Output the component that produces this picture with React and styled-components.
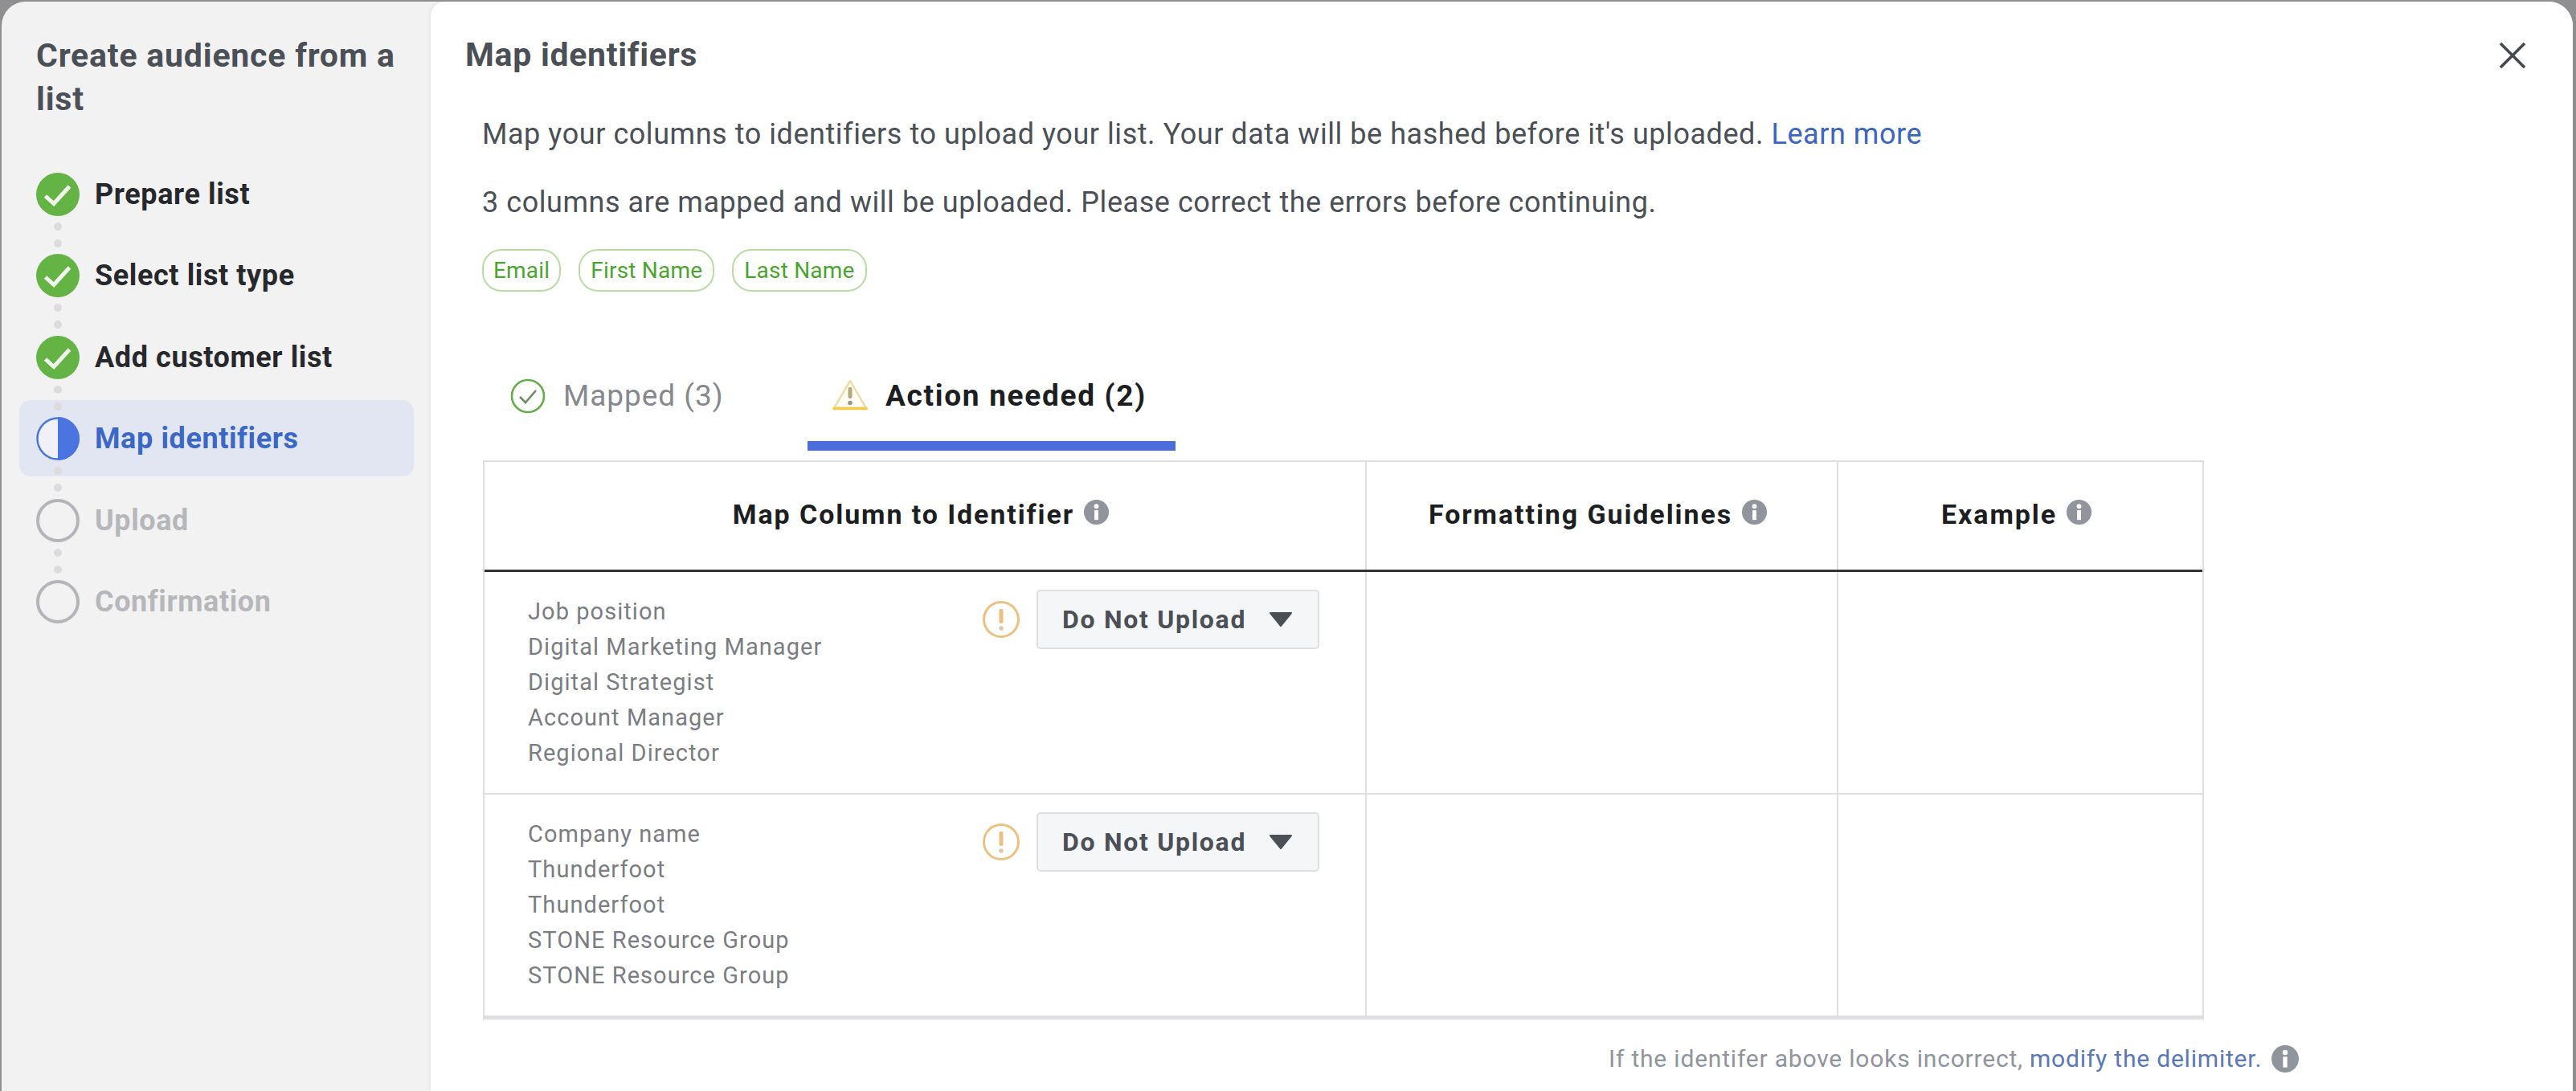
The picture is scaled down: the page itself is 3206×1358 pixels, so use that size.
import React from 'react';
import styled, { createGlobalStyle } from 'styled-components';

const GlobalStyle = createGlobalStyle`
  html, body {
    margin: 0;
    padding: 0;
    background: #8f8f91;
    font-family: Roboto, "Liberation Sans", Arial, sans-serif;
  }
  * {
    box-sizing: border-box;
  }
`;

const Page = styled.div`
  width: 3206px;
  height: 1358px;
  padding: 2px 4px 0 2px;
  overflow: hidden;
`;

const Modal = styled.div`
  display: flex;
  height: 100%;
  background: #f2f2f3;
  border-radius: 30px 30px 0 0;
  overflow: hidden;
`;

const Sidebar = styled.aside`
  width: 534px;
  flex-shrink: 0;
  padding: 40px 0 0 43px;
`;

const SidebarTitle = styled.h1`
  margin: 0 0 65px;
  width: 480px;
  font-size: 41px;
  line-height: 54px;
  font-weight: 700;
  letter-spacing: 0.8px;
  color: #4b4f56;
`;

const StepRow = styled.div`
  position: relative;
  display: flex;
  align-items: center;
  gap: 19px;
  height: 54px;
  z-index: 0;

  ${(p) =>
    p.$active &&
    `
    &::before {
      content: '';
      position: absolute;
      left: -21px;
      top: -21px;
      width: 491px;
      height: 95px;
      border-radius: 14px;
      background: #e1e6f2;
    }
  `}
`;

const StepLabel = styled.span`
  position: relative;
  font-size: 36px;
  font-weight: 700;
  letter-spacing: 0.6px;
  color: ${(p) => p.$color};
`;

const StepIcon = styled.svg`
  position: relative;
  width: 54px;
  height: 54px;
  flex-shrink: 0;
`;

const Connector = styled.div`
  position: relative;
  z-index: 1;
  display: flex;
  flex-direction: column;
  align-items: center;
  gap: 11px;
  width: 54px;
  height: 47.4px;
  padding-top: 8px;
`;

const Dot = styled.span`
  width: 10px;
  height: 10px;
  border-radius: 50%;
  background: #dcdcdf;
`;

const Main = styled.main`
  position: relative;
  flex: 1;
  background: #fff;
  border-radius: 18px 0 0 0;
  box-shadow: -2px 0 4px rgba(0, 0, 0, 0.05);
  padding: 39px 0 0 43px;
`;

const MainTitle = styled.h2`
  margin: 0 0 51px;
  font-size: 41px;
  line-height: 54px;
  font-weight: 700;
  letter-spacing: 0.7px;
  color: #4b4f56;
`;

const CloseButton = styled.button`
  position: absolute;
  top: 49px;
  right: 57px;
  width: 36px;
  height: 36px;
  padding: 0;
  border: none;
  background: none;
`;

const Body = styled.div`
  padding-left: 21px;
`;

const Text = styled.p`
  margin: 0 0 43px;
  font-size: 36px;
  line-height: 42px;
  letter-spacing: 0.55px;
  color: #4b4f56;
`;

const LearnMore = styled.a`
  color: #3a66c0;
`;

const ChipRow = styled.div`
  display: flex;
  gap: 22px;
  margin-top: -6px;
`;

const Chip = styled.span`
  display: flex;
  align-items: center;
  height: 53px;
  padding: 0 ${(p) => p.$pad}px;
  border: 2px solid #b8dca2;
  border-radius: 24px;
  font-size: 28px;
  letter-spacing: 0.2px;
  color: #4aa52e;
`;

const TabRow = styled.div`
  display: flex;
  margin: 108px 0 0;
  height: 90px;
`;

const Tab = styled.div`
  display: flex;
  align-items: flex-start;
  gap: ${(p) => p.$gap}px;
  width: ${(p) => p.$width}px;
  padding: 0 0 0 ${(p) => p.$pad}px;
  border-bottom: ${(p) => (p.$active ? '12px solid #4a6fdc' : 'none')};
  font-size: 37px;
  line-height: 44px;
  letter-spacing: ${(p) => (p.$active ? '1.7px' : '0.95px')};
  font-weight: ${(p) => (p.$active ? 700 : 400)};
  color: ${(p) => (p.$active ? '#1c1e21' : '#85888d')};
`;

const Table = styled.div`
  width: 2142px;
  margin-top: 12px;
  margin-left: 1px;
  border: solid #dddfe2;
  border-width: 2px 2px 5px 2px;
`;

const TableRow = styled.div`
  display: grid;
  grid-template-columns: 1096px 587px 1fr;
  height: ${(p) => p.$height}px;
  border-bottom: ${(p) => p.$border};
`;

const HeadCell = styled.div`
  display: flex;
  justify-content: center;
  align-items: flex-start;
  gap: 12px;
  padding: 45px 10px 0 0;
  font-size: 34px;
  line-height: 40px;
  font-weight: 700;
  letter-spacing: 1.9px;
  color: #1c1e21;
  border-left: ${(p) => (p.$first ? 'none' : '2px solid #dddfe2')};
`;

const BodyCell = styled.div`
  border-left: 2px solid #dddfe2;
`;

const MapCell = styled.div`
  display: flex;
  padding: 22px 0 0 54px;
`;

const ColumnValues = styled.div`
  flex: 1;
  padding-top: ${(p) => p.$offset}px;
  font-size: 29px;
  line-height: 44px;
  letter-spacing: 1.05px;
  color: #7a7d82;
`;

const Controls = styled.div`
  display: flex;
  align-items: center;
  gap: 21px;
  height: 74px;
  margin-right: 57px;
`;

const Dropdown = styled.div`
  display: flex;
  align-items: center;
  width: 352px;
  height: 74px;
  padding-left: 30px;
  border: 2px solid #dddfe2;
  border-radius: 5px;
  background: #f5f6f7;
  font-size: 32px;
  font-weight: 700;
  letter-spacing: 1.7px;
  color: #4b4f56;
`;

const Caret = styled.svg`
  width: 30px;
  height: 18px;
  margin-left: 28px;
`;

const InfoIcon = styled.svg`
  width: ${(p) => p.$size}px;
  height: ${(p) => p.$size}px;
  margin-top: ${(p) => p.$top || 0}px;
  flex-shrink: 0;
`;

const Footer = styled.div`
  display: flex;
  align-items: center;
  gap: 12px;
  margin: 31px 0 0 1402px;
  font-size: 30px;
  line-height: 36px;
  letter-spacing: 0.8px;
  color: #90949c;
`;

const DelimiterLink = styled.a`
  color: #5b77b5;
`;

const Info = ({ size = 31, top = 2 }) => (
  <InfoIcon $size={size} $top={top} viewBox="0 0 32 32">
    <circle cx="16" cy="16" r="16" fill="#90949c" />
    <circle cx="16" cy="8.5" r="3" fill="#fff" />
    <rect x="13.5" y="13.5" width="5" height="12.5" fill="#fff" />
  </InfoIcon>
);

const DoneIcon = () => (
  <StepIcon viewBox="0 0 54 54">
    <circle cx="27" cy="27" r="27" fill="#63b345" />
    <path d="M11.5 29 L22 38.5 L41.5 17" fill="none" stroke="#f2f7ee" strokeWidth="5" />
  </StepIcon>
);

const ActiveIcon = () => (
  <StepIcon viewBox="0 0 54 54">
    <circle cx="27" cy="27" r="25.5" fill="#f0f1f6" stroke="#4a74e0" strokeWidth="2.5" />
    <path d="M27 0 A27 27 0 0 1 27 54 Z" fill="#4a74e0" />
  </StepIcon>
);

const TodoIcon = () => (
  <StepIcon viewBox="0 0 54 54">
    <circle cx="27" cy="27" r="25" fill="none" stroke="#b4b5b8" strokeWidth="4" />
  </StepIcon>
);

const Alert = () => (
  <InfoIcon $size={46} viewBox="0 0 46 46">
    <circle cx="23" cy="23" r="21.5" fill="#fff" stroke="#eec07f" strokeWidth="3" />
    <rect x="20.5" y="10" width="5" height="18" rx="2" fill="#eec07f" />
    <circle cx="23" cy="34" r="2.8" fill="#d9c9a8" />
  </InfoIcon>
);

const TabCheck = () => (
  <InfoIcon $size={44} viewBox="0 0 44 44">
    <circle cx="22" cy="22" r="20" fill="none" stroke="#5fae47" strokeWidth="2.6" />
    <path d="M12 23 L19 30 L32 15" fill="none" stroke="#6f8a66" strokeWidth="2.6" />
  </InfoIcon>
);

const TabWarning = () => (
  <InfoIcon $size={44} viewBox="0 0 44 44">
    <path d="M22 3 L42 37 L2 37 Z" fill="#fffdf5" stroke="#eed9a0" strokeWidth="2.4" strokeLinejoin="round" />
    <path d="M2 37.5 L42 37.5" stroke="#f7c948" strokeWidth="3.5" strokeLinecap="round" />
    <rect x="19.5" y="11" width="5" height="14" rx="2" fill="#b7a877" />
    <circle cx="22" cy="30.5" r="2.8" fill="#9a9688" />
  </InfoIcon>
);

const steps = [
  { label: 'Prepare list', state: 'done' },
  { label: 'Select list type', state: 'done' },
  { label: 'Add customer list', state: 'done' },
  { label: 'Map identifiers', state: 'active' },
  { label: 'Upload', state: 'todo' },
  { label: 'Confirmation', state: 'todo' },
];

const stepColors = { done: '#26282c', active: '#3b68c4', todo: '#b6b7ba' };
const stepIcons = { done: DoneIcon, active: ActiveIcon, todo: TodoIcon };

const rows = [
  {
    values: ['Job position', 'Digital Marketing Manager', 'Digital Strategist', 'Account Manager', 'Regional Director'],
    height: 277,
    offset: 5,
  },
  {
    values: ['Company name', 'Thunderfoot', 'Thunderfoot', 'STONE Resource Group', 'STONE Resource Group'],
    height: 275,
    offset: 5,
  },
];

const App = () => {
  return (
    <Page>
      <GlobalStyle />
      <Modal>
        <Sidebar>
          <SidebarTitle>Create audience from a list</SidebarTitle>
          {steps.map((step, i) => {
            const Icon = stepIcons[step.state];
            return (
              <React.Fragment key={step.label}>
                <StepRow $active={step.state === 'active'}>
                  <Icon />
                  <StepLabel $color={stepColors[step.state]}>{step.label}</StepLabel>
                </StepRow>
                {i < steps.length - 1 && (
                  <Connector>
                    <Dot />
                    <Dot />
                  </Connector>
                )}
              </React.Fragment>
            );
          })}
        </Sidebar>
        <Main>
          <MainTitle>Map identifiers</MainTitle>
          <CloseButton aria-label="Close">
            <svg width="36" height="36" viewBox="0 0 36 36">
              <path d="M3 3 L33 33 M33 3 L3 33" stroke="#444950" strokeWidth="3.6" />
            </svg>
          </CloseButton>
          <Body>
            <Text>
              Map your columns to identifiers to upload your list. Your data will be hashed before it's uploaded.{' '}
              <LearnMore>Learn more</LearnMore>
            </Text>
            <Text>3 columns are mapped and will be uploaded. Please correct the errors before continuing.</Text>
            <ChipRow>
              <Chip $pad={12}>Email</Chip>
              <Chip $pad={13}>First Name</Chip>
              <Chip $pad={13}>Last Name</Chip>
            </ChipRow>
            <TabRow>
              <Tab $width={405} $pad={35} $gap={22}>
                <TabCheck />
                Mapped (3)
              </Tab>
              <Tab $active $width={458} $pad={31} $gap={22}>
                <TabWarning />
                Action needed (2)
              </Tab>
            </TabRow>
            <Table>
              <TableRow $height={137} $border="3px solid #333">
                <HeadCell $first>
                  Map Column to Identifier
                  <Info />
                </HeadCell>
                <HeadCell>
                  Formatting Guidelines
                  <Info />
                </HeadCell>
                <HeadCell>
                  Example
                  <Info />
                </HeadCell>
              </TableRow>
              {rows.map((row, i) => (
                <TableRow
                  key={row.values[0]}
                  $height={row.height}
                  $border={i < rows.length - 1 ? '2px solid #dddfe2' : 'none'}
                >
                  <MapCell>
                    <ColumnValues $offset={row.offset}>
                      {row.values.map((value, j) => (
                        <div key={j}>{value}</div>
                      ))}
                    </ColumnValues>
                    <Controls>
                      <Alert />
                      <Dropdown>
                        Do Not Upload
                        <Caret viewBox="0 0 30 18">
                          <path d="M2 1 L28 1 L15 17 Z" fill="#4b4f56" stroke="#4b4f56" strokeWidth="2" strokeLinejoin="round" />
                        </Caret>
                      </Dropdown>
                    </Controls>
                  </MapCell>
                  <BodyCell />
                  <BodyCell />
                </TableRow>
              ))}
            </Table>
            <Footer>
              <span>
                If the identifer above looks incorrect, <DelimiterLink>modify the delimiter.</DelimiterLink>
              </span>
              <Info size={34} top={0} />
            </Footer>
          </Body>
        </Main>
      </Modal>
    </Page>
  );
};

export default App;
